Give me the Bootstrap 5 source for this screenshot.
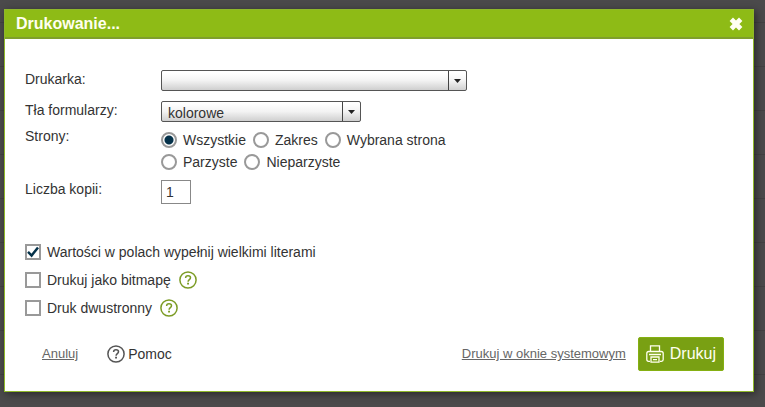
<!DOCTYPE html>
<html lang="pl">
<head>
<meta charset="utf-8">
<meta name="viewport" content="width=device-width, initial-scale=1">
<title>Drukowanie</title>
<link href="https://cdn.jsdelivr.net/npm/bootstrap@5.3.0/dist/css/bootstrap.min.css" rel="stylesheet">
<style>
body{font:14px/18px "Liberation Sans",Arial,sans-serif;color:#333;min-height:100vh;padding:9px 11px 15px 4px;
background:repeating-linear-gradient(#4b4a4b 0 22px,#434243 22px 23px,#4b4a4b 23px 44px)}
.print-dialog{border:1px solid #8fb82a;box-shadow:2px 2px 8px rgba(0,0,0,.45)}
.print-head{background:#8ebb16;border-bottom:2px solid #7f9f2c;height:29px;padding:0 10px 0 11px}
.print-head h1{font-size:16px;line-height:26px;color:#fffff0}
.print-main{padding:31px 29px 20px 20px}
.field-label{width:136px}
.row-background{margin-top:10px}
.row-pages{margin-top:5px}
.row-copies{margin-top:7px}
.combo{position:relative}
.combo-wide{width:306px}
.combo-short{width:200px}
.combo select{appearance:none;width:100%;height:21px;padding:2px 24px 0 6px;line-height:16px;color:#333;border:1px solid #555;border-radius:2px;background:linear-gradient(#fff 10%,#f3f3f3 50%,#cfcfcf)}
.combo-arrow{position:absolute;top:1px;right:1px;bottom:1px;width:18px;border-left:1px solid #444;pointer-events:none}
.choice{gap:6px}
.choices{gap:0 7px;width:306px;padding-top:2px}
.choices .choice{height:22px}
.choice input{appearance:none;flex:none;width:16px;height:16px;margin:0;border:2px solid #999;background:#fff}
.choice input[type=radio]{border-radius:50%}
.choice input[type=radio]:checked{background:radial-gradient(circle,#05324a 0 4px,#fff 5px)}
.choice input[type=checkbox]:checked{background:#fff url("data:image/svg+xml,%3Csvg xmlns='http://www.w3.org/2000/svg' viewBox='0 0 12 12'%3E%3Cpath d='M1 5.8 4.6 9.5 11 1.4' fill='none' stroke='%2305324a' stroke-width='2.5'/%3E%3C/svg%3E")}
.copies{width:30px;height:24px;border:1px solid #888;padding:0 4px;color:#333}
.options{margin-top:34px}
.options>div{height:28px;gap:8px}
.help{color:#7c9c25}
.actions{margin-top:15px;padding-left:17px}
.actions a{color:#666}
.actions .quiet{font-size:13px}
.actions .help-link{gap:3px;margin-left:29px;color:#555}
.help-link span{color:#333}
.btn-print{background:#79a013;border:1px solid #85b012;border-radius:2px;color:#fffff0;font-size:16px;line-height:18px;height:34px;padding:0 7px;gap:6px;margin-left:12px}
.btn-print:hover{background:#6a8f10;color:#fff}
</style>
</head>
<body>
<svg class="d-none" aria-hidden="true">
<symbol id="question" viewBox="0 0 18 18"><g fill="none" stroke="currentColor"><circle cx="9" cy="9" r="8.1" stroke-width="1.5"/><path d="M6.6 7C6.6 5.5 7.6 4.8 9 4.8s2.500.8 2.500 2c0 1.800-2.400 1.800-2.400 3.900" stroke-width="1.5"/></g><path fill="currentColor" d="M8.1 11.8h1.900v1.800H8.1z"/></symbol>
</svg>
<main class="print-dialog bg-white" role="dialog" aria-labelledby="dialog-title">
<header class="print-head d-flex align-items-center justify-content-between">
<h1 id="dialog-title" class="fw-bold m-0">Drukowanie...</h1>
<button type="button" class="btn p-0 border-0 d-flex" aria-label="Zamknij"><svg width="14" height="14" viewBox="0 0 14 14"><path d="m2.300 2.300 9.400 9.400m0-9.400-9.400 9.400" stroke="#fffff4" stroke-width="4.800"/></svg></button>
</header>
<form class="print-main">
<div class="d-flex align-items-start">
<label class="field-label" for="printer">Drukarka:</label>
<div class="combo combo-wide"><select id="printer" class="d-block"><option></option></select><span class="combo-arrow d-flex align-items-center justify-content-center"><svg width="7" height="4"><path d="M0 0h7L3.500 4z" fill="#222"/></svg></span></div>
</div>
<div class="row-background d-flex align-items-start">
<label class="field-label" for="background">Tła formularzy:</label>
<div class="combo combo-short"><select id="background" class="d-block"><option>kolorowe</option></select><span class="combo-arrow d-flex align-items-center justify-content-center"><svg width="7" height="4"><path d="M0 0h7L3.500 4z" fill="#222"/></svg></span></div>
</div>
<div class="row-pages d-flex align-items-start" role="radiogroup" aria-labelledby="pages-label">
<span class="field-label" id="pages-label">Strony:</span>
<div class="choices d-flex flex-wrap">
<label class="choice d-flex align-items-center"><input type="radio" name="pages" checked>Wszystkie</label>
<label class="choice d-flex align-items-center"><input type="radio" name="pages">Zakres</label>
<label class="choice d-flex align-items-center"><input type="radio" name="pages">Wybrana strona</label>
<label class="choice d-flex align-items-center"><input type="radio" name="pages">Parzyste</label>
<label class="choice d-flex align-items-center"><input type="radio" name="pages">Nieparzyste</label>
</div>
</div>
<div class="row-copies d-flex align-items-start">
<label class="field-label" for="copies">Liczba kopii:</label>
<input id="copies" class="copies" type="text" value="1">
</div>
<div class="options">
<div class="d-flex align-items-center"><label class="choice d-flex align-items-center"><input type="checkbox" checked>Wartości w polach wypełnij wielkimi literami</label></div>
<div class="d-flex align-items-center"><label class="choice d-flex align-items-center"><input type="checkbox">Drukuj jako bitmapę</label><a href="#" class="help d-flex" aria-label="Pomoc: bitmapa"><svg width="18" height="18"><use href="#question"/></svg></a></div>
<div class="d-flex align-items-center"><label class="choice d-flex align-items-center"><input type="checkbox">Druk dwustronny</label><a href="#" class="help d-flex" aria-label="Pomoc: druk dwustronny"><svg width="18" height="18"><use href="#question"/></svg></a></div>
</div>
<div class="actions d-flex align-items-center">
<a href="#" class="quiet">Anuluj</a>
<a href="#" class="help-link d-flex align-items-center text-decoration-none"><svg width="18" height="18"><use href="#question"/></svg><span>Pomoc</span></a>
<a href="#" class="quiet ms-auto">Drukuj w oknie systemowym</a>
<button type="button" class="btn btn-print d-flex align-items-center"><svg width="18" height="18" viewBox="0 0 18 18" fill="none" stroke="currentColor" stroke-width="1.300"><path d="M4.500 6.500V.8h9v5.700M4 16.300H2.500Q.8 16.300.8 14.600V8.500Q.8 6.500 2.800 6.500h12.400q2 0 2 2v6.100q0 1.700-1.700 1.700H14M5 12h8v5.200H5zM7 14.600h4M3 9.500h12"/></svg>Drukuj</button>
</div>
</form>
</main>
<script src="https://cdn.jsdelivr.net/npm/bootstrap@5.3.0/dist/js/bootstrap.bundle.min.js"></script>
</body>
</html>
